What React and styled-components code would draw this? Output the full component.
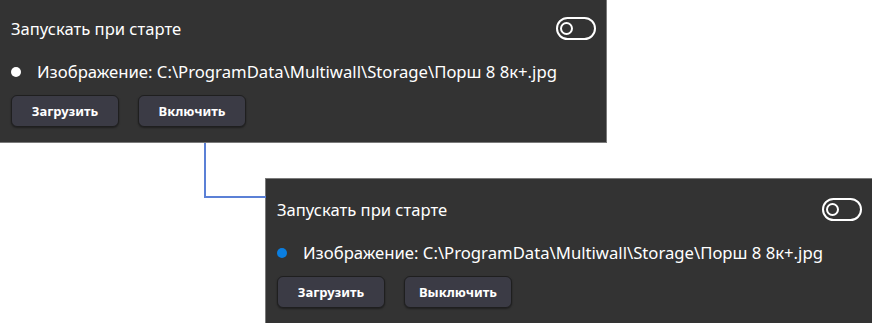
import React from "react"
import styled, { createGlobalStyle } from "styled-components"

const GlobalStyle = createGlobalStyle`
  html, body {
    margin: 0;
    padding: 0;
    background: #ffffff;
    overflow: hidden;
  }
  body {
    font-family: "Noto Sans", "Open Sans", sans-serif;
  }
`

const Canvas = styled.div`
  position: relative;
  width: 875px;
  height: 323px;
  overflow: hidden;
  display: flex;
  flex-direction: column;
`

const Panel = styled.section`
  box-sizing: border-box;
  width: 607px;
  height: 145px;
  padding: 19px 10px 0 11px;
  background: #333333;
  color: #ffffff;
  display: flex;
  flex-direction: column;
  margin-top: ${(p) => p.$top}px;
  margin-left: ${(p) => p.$left}px;
  border-top: ${(p) => (p.$framed ? "1px solid #7a7a7a" : "none")};
  border-left: ${(p) => (p.$framed ? "1px solid #7a7a7a" : "none")};
  border-bottom: ${(p) => (p.$framed ? "none" : "1px solid #7a7a7a")};
  border-right: ${(p) => (p.$framed ? "none" : "1px solid #7a7a7a")};
`

const Header = styled.div`
  display: flex;
  align-items: center;
  justify-content: space-between;
  height: 23px;
`

const Title = styled.span`
  font-size: 16.6px;
  line-height: 22px;
`

const Switch = styled.div`
  box-sizing: border-box;
  width: 40px;
  height: 23px;
  border: 2px solid #ffffff;
  border-radius: 12px;
  display: flex;
  align-items: center;
  padding-left: 2px;
`

const Knob = styled.div`
  box-sizing: border-box;
  width: 13px;
  height: 13px;
  border-radius: 50%;
  border: 2px solid #ffffff;
`

const ImageRow = styled.div`
  display: flex;
  align-items: center;
  margin-top: 21px;
  height: 22px;
`

const Dot = styled.span`
  width: 10px;
  height: 10px;
  border-radius: 50%;
  background: ${(p) => (p.$active ? "#0a7ee0" : "#ffffff")};
  margin: 0 16px 0 0;
  flex-shrink: 0;
`

const Path = styled.span`
  font-size: 16.7px;
  line-height: 22px;
  white-space: nowrap;
`

const Actions = styled.div`
  display: flex;
  gap: 19px;
  margin-top: 12px;
`

const Button = styled.button`
  box-sizing: border-box;
  width: 108px;
  height: 32px;
  border-radius: 6px;
  border: 1px solid #1f1f1f;
  background: #3b3b45;
  color: #ffffff;
  font-family: "Noto Sans", "Open Sans", sans-serif;
  font-weight: 700;
  font-size: 13px;
  padding: 0;
  box-shadow: 0 1px 2px rgba(0, 0, 0, 0.4);
`

const Wire = styled.svg`
  position: absolute;
  left: 0;
  top: 0;
  pointer-events: none;
`

const Settings = ({ active, ...rest }) => (
  <Panel {...rest}>
    <Header>
      <Title>Запускать при старте</Title>
      <Switch>
        <Knob />
      </Switch>
    </Header>
    <ImageRow>
      <Dot $active={active} />
      <Path>Изображение: C:\ProgramData\Multiwall\Storage\Порш 8 8к+.jpg</Path>
    </ImageRow>
    <Actions>
      <Button>Загрузить</Button>
      <Button>{active ? "Выключить" : "Включить"}</Button>
    </Actions>
  </Panel>
)

const App = () => (
  <>
    <GlobalStyle />
    <Canvas>
      <Settings $top={-2} $left={0} />
      <Settings active $framed $top={35} $left={265} />
      <Wire width="875" height="323">
        <polyline
          points="205,143 205,197 266,197"
          fill="none"
          stroke="#5b80d6"
          strokeWidth="2"
        />
      </Wire>
    </Canvas>
  </>
)

export default App
